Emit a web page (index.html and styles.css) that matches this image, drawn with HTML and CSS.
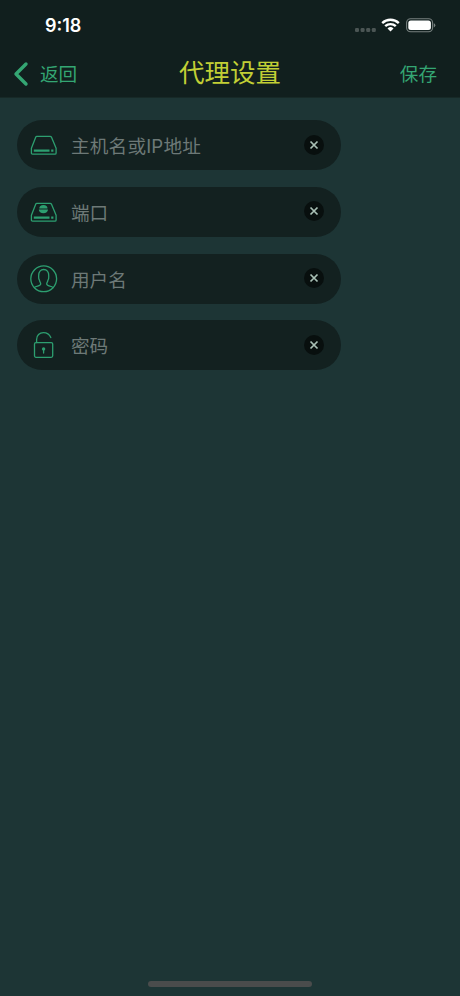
FILE: index.html
```html
<!DOCTYPE html>
<html lang="zh-CN">
<head>
<meta charset="utf-8">
<title>代理设置</title>
<link rel="stylesheet" href="styles.css">
</head>
<body>
<div class="screen">
  <header class="header">
    <div class="status">
      <span class="time">9:18</span>
      <div class="indicators">
        <svg class="signal" width="21" height="4" viewBox="0 0 21 4"><rect x="0" width="4" height="4" rx="1.2"/><rect x="5.600" width="4" height="4" rx="1.2"/><rect x="11.200" width="4" height="4" rx="1.2"/><rect x="16.800" width="4" height="4" rx="1.2"/></svg>
        <svg class="wifi" width="19" height="14" viewBox="0 0 19 14"><path d="M1.200 5.100a12 12 0 0 1 16.600 0M4.200 8.200a7.700 7.700 0 0 1 10.600 0"/><path class="solid" d="M6.500 10.500a4.400 4.400 0 0 1 6 0l-3 3z"/></svg>
        <svg class="battery" width="30" height="15" viewBox="0 0 30 15"><rect class="shell" x=".6" y=".8" width="26" height="13" rx="4"/><rect class="charge" x="2.300" y="2.500" width="22.600" height="9.600" rx="2.500"/><path class="cap" d="M27.800 5.200q1.500.5 1.500 2.100t-1.500 2.100z"/></svg>
      </div>
    </div>
    <nav class="nav">
      <a class="back"><svg width="16" height="26" viewBox="0 0 16 26"><path d="M13 3L3 13l10 10"/></svg><span>返回</span></a>
      <h1 class="title">代理设置</h1>
      <a class="save">保存</a>
    </nav>
  </header>
  <main class="form">
    <div class="field">
      <svg class="icon" width="28" height="28" viewBox="0 0 28 28"><path d="M6.800 5.300h13.400q.8 0 1.200.8l4.700 11.200v4.700q0 1.200-1.200 1.200H2.600q-1.200 0-1.200-1.200v-4.700L5.800 6.100q.3-.8 1-.8z"/><path class="bar" d="M3.800 19.700h15.700M21.200 19.700h2.200"/></svg>
      <span class="label wide">主机名或IP地址</span>
      <span class="clear"><svg width="20" height="20" viewBox="0 0 20 20"><path d="M6.500 6.500l7 7m0-7l-7 7"/></svg></span>
    </div>
    <div class="field">
      <svg class="icon" width="28" height="28" viewBox="0 0 28 28"><path d="M6.800 5.300h13.400q.8 0 1.200.8l4.700 11.200v4.700q0 1.200-1.200 1.200H2.600q-1.200 0-1.200-1.200v-4.700L5.800 6.100q.3-.8 1-.8z"/><path class="bar" d="M3.800 19.700h15.700M21.200 19.700h2.200"/><path class="globe" d="M9.300 10.600a4.100 3.700 0 0 1 8.200 0zM8.800 11.400h9.200a4.600 3.900 0 0 1-9.200 0z"/></svg>
      <span class="label">端口</span>
      <span class="clear"><svg width="20" height="20" viewBox="0 0 20 20"><path d="M6.500 6.500l7 7m0-7l-7 7"/></svg></span>
    </div>
    <div class="field">
      <svg class="icon" width="28" height="28" viewBox="0 0 28 28"><circle cx="13.700" cy="13.800" r="12.900"/><path d="M4.300 22.500c2.400-1.600 6.400-1.300 6.400-3.400 0-1.300-.9-2-1.200-3.800C8.200 13.600 8.700 12.400 8.700 10.300 8.600 6.800 10.600 4.500 13.700 4.500s5.100 2.300 5 5.800c0 2.100.5 3.300-.8 5-.3 1.800-1.200 2.500-1.200 3.800 0 2.100 4 1.800 6.400 3.400"/></svg>
      <span class="label">用户名</span>
      <span class="clear"><svg width="20" height="20" viewBox="0 0 20 20"><path d="M6.500 6.500l7 7m0-7l-7 7"/></svg></span>
    </div>
    <div class="field">
      <svg class="icon" width="28" height="28" viewBox="0 0 28 28"><path d="M6.600 11.600V8.400C6.600 4.500 9.500 1.700 13.400 1.700c3.500 0 6.200 2 7.400 4.900"/><rect x="4.500" y="11.600" width="18.200" height="14.700" rx="1.500"/><circle class="globe" cx="13.600" cy="17.900" r="1.700"/><path d="M13.600 18v4"/></svg>
      <span class="label">密码</span>
      <span class="clear"><svg width="20" height="20" viewBox="0 0 20 20"><path d="M6.500 6.500l7 7m0-7l-7 7"/></svg></span>
    </div>
  </main>
  <div class="home"></div>
</div>
</body>
</html>
```
FILE: styles.css
```css
* { box-sizing: border-box; }
body {
  margin: 0;
  background: #1d3535;
  font-family: "Inter", "Noto Sans CJK SC", sans-serif;
}
svg { display: block; fill: none; flex: none; }
.screen {
  display: flex;
  flex-direction: column;
  height: 996px;
}
.header {
  height: 98px;
  background: #111f1e;
  border-bottom: 1px solid #172927;
}
.status {
  display: flex;
  justify-content: space-between;
  align-items: center;
  height: 50px;
  padding: 0 24px 0 45px;
}
.time { font-size: 18px; font-weight: 600; color: #fff; line-height: 22px; padding-top: 2px; }
.indicators { display: flex; align-items: center; }
.signal { fill: #4b5554; margin: 10px 5px 0 0; }
.wifi { stroke: #fff; stroke-width: 2.4; margin-right: 6px; }
.wifi .solid { fill: #fff; stroke: none; }
.battery .shell { stroke: #77807f; stroke-width: 1.1; }
.battery .charge { fill: #fff; }
.battery .cap { fill: #77807f; }
.nav {
  display: grid;
  grid-template-columns: 1fr auto 1fr;
  align-items: center;
  height: 47px;
  padding: 0 23px 0 13px;
  color: #34a673;
  font-size: 18.6px;
  font-family: "Noto Sans CJK SC", sans-serif;
  line-height: 28px;
}
.back { display: flex; align-items: center; gap: 11px; }
.back span, .save { padding-bottom: 2px; }
.back svg { stroke: #34a673; stroke-width: 3.4; stroke-linecap: round; stroke-linejoin: round; }
.title {
  margin: 0 0 6px;
  padding-left: 10px;
  font-size: 25.5px;
  font-weight: 400;
  line-height: 36px;
  color: #c2cf35;
}
.save { justify-self: end; }
.form {
  display: flex;
  flex-direction: column;
  gap: 16.6px;
  padding: 22.400px 0 0 17px;
}
.field {
  display: flex;
  align-items: center;
  width: 324px;
  height: 50px;
  padding: 0 17px 0 13px;
  border-radius: 25px;
  background: #132120;
}
.icon { stroke: #2d9f70; stroke-width: 1.3; stroke-linecap: round; stroke-linejoin: round; }
.icon .bar { stroke-width: 2.2; stroke-linecap: butt; }
.icon .globe { fill: #2d9f70; stroke: none; }
.label {
  flex: 1;
  margin-left: 13px;
  padding-top: 2px;
  font-size: 18.6px;
  line-height: 28px;
  color: #6d7977;
}
.label.wide { letter-spacing: .2px; }
.clear {
  width: 20px;
  height: 20px;
  margin-top: -1px;
  border-radius: 50%;
  background: #080f0e;
}
.clear svg { stroke: #a9c0b5; stroke-width: 1.7; }
.home {
  width: 164px;
  height: 6px;
  margin: auto auto 9px;
  border-radius: 3px;
  background: #4a4c4c;
}
```
